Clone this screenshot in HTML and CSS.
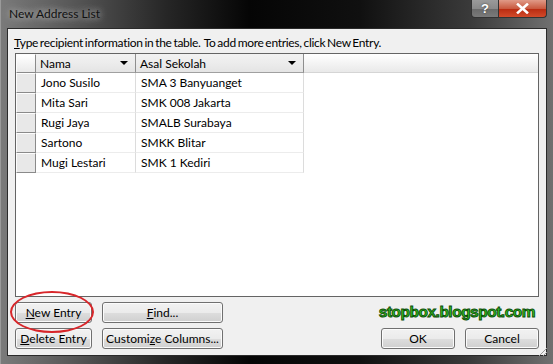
FILE: index.html
```html
<!DOCTYPE html>
<html lang="en">
<head>
    <meta charset="UTF-8">
    <meta name="viewport" content="width=device-width, initial-scale=1.0">
    <title>New Address List</title>
    <link rel="stylesheet" href="styles.css">
</head>
<body>
    <div class="window">
        <div class="titlebar">
            <span class="title">New Address List</span>
            <div class="caption-buttons">
                <span class="cap cap-help">?</span>
                <span class="cap cap-close">
                    <svg width="13" height="11" viewBox="0 0 13 11">
                        <path d="M2 1.5 L11 9.5 M11 1.5 L2 9.5" stroke="#fff" stroke-width="2.6" stroke-linecap="square"/>
                    </svg>
                </span>
            </div>
        </div>

        <div class="client">
            <p class="hint"><u>T</u>ype recipient information in the table.&nbsp; To add more entries, click New Entry.</p>

            <div class="grid">
                <div class="grid-rows">
                    <div class="head-cell sel"></div>
                    <div class="head-cell col">Nama<span class="arrow"></span></div>
                    <div class="head-cell col">Asal Sekolah<span class="arrow"></span></div>
                    <div class="head-cell filler"></div>

                    <div class="sel"></div><div class="cell">Jono Susilo</div><div class="cell">SMA 3 Banyuanget</div><div class="cell empty"></div>
                    <div class="sel"></div><div class="cell">Mita Sari</div><div class="cell">SMK 008 Jakarta</div><div class="cell empty"></div>
                    <div class="sel"></div><div class="cell">Rugi Jaya</div><div class="cell">SMALB Surabaya</div><div class="cell empty"></div>
                    <div class="sel"></div><div class="cell">Sartono</div><div class="cell">SMKK Blitar</div><div class="cell empty"></div>
                    <div class="sel"></div><div class="cell">Mugi Lestari</div><div class="cell">SMK 1 Kediri</div><div class="cell empty"></div>
                </div>
            </div>

            <div class="actions">
                <div class="action-row">
                    <button class="btn btn-small highlighted"><u>N</u>ew Entry</button>
                    <button class="btn btn-large"><u>F</u>ind...</button>
                    <span class="watermark">stopbox.blogspot.com</span>
                </div>
                <div class="action-row">
                    <button class="btn btn-small"><u>D</u>elete Entry</button>
                    <button class="btn btn-large">Customi<u>z</u>e Columns...</button>
                    <span class="spacer"></span>
                    <button class="btn btn-dialog">OK</button>
                    <button class="btn btn-dialog">Cancel</button>
                </div>
            </div>
            <span class="grip"></span>
        </div>
    </div>
</body>
</html>
```

FILE: styles.css
```css
html, body {
    margin: 0;
    padding: 0;
}
body {
    width: 553px;
    height: 364px;
    overflow: hidden;
    font-family: Lato, 'Noto Sans', sans-serif;
    font-size: 12px;
    color: #000;
    background-color: #000;
}
.window {
    width: 553px;
    height: 364px;
    box-sizing: border-box;
    display: flex;
    flex-direction: column;
    padding: 0 6px 8px 6px;
    background: linear-gradient(90deg, #7a7a7a 0%, #5a5a5a 12%, #262626 30%, #050505 45%, #101010 65%, #3a3a3a 85%, #707070 100%);
    border-left: 1px solid #9a9a9a;
}
.titlebar {
    height: 28px;
    display: flex;
    justify-content: space-between;
    align-items: flex-start;
    flex-shrink: 0;
}
.title {
    margin: 6px 0 0 2px;
    color: #111;
    text-shadow: 0 0 6px #bbb, 0 0 10px #aaa;
}
.caption-buttons {
    display: flex;
}
.cap {
    height: 18px;
    display: flex;
    align-items: center;
    justify-content: center;
    border: 1px solid #333;
    border-top: none;
    box-sizing: border-box;
}
.cap-help {
    width: 28px;
    border-radius: 0 0 0 4px;
    background: linear-gradient(#9a9a9a, #8a8a8a 50%, #6a6a6a 51%, #7a7a7a);
    color: #fff;
    font-family: 'Liberation Sans', sans-serif;
    font-weight: bold;
    font-size: 13px;
    text-shadow: 0 0 2px #333;
}
.cap-close {
    width: 48px;
    border-left: none;
    border-radius: 0 0 4px 0;
    background: linear-gradient(#e09a88, #c95a40 50%, #b82a10 51%, #d24a2a);
}
.client {
    flex: 1;
    position: relative;
    display: flex;
    flex-direction: column;
    background-color: #f0f0f0;
    border: 1px solid #2a2a2a;
    padding: 0 7px 7px 7px;
}
.hint {
    margin: 6px 0 2px -1px;
    line-height: 16px;
    white-space: nowrap;
    word-spacing: -1px;
    letter-spacing: -0.3px;
}
.grid {
    flex: 1;
    background-color: #fff;
    border: 1px solid #646464;
}
.grid-rows {
    display: grid;
    grid-template-columns: 20px 100px 168px 1fr;
    grid-template-rows: 19px;
    grid-auto-rows: 20px;
}
.head-cell {
    box-sizing: border-box;
    border-bottom: 1px solid #a0a0a0;
    background: linear-gradient(#ffffff, #f4f4f4 50%, #e9e9e9);
}
.head-cell.col {
    display: flex;
    align-items: center;
    justify-content: space-between;
    padding: 0 7px 0 4px;
    border-right: 1px solid #8e8e8e;
    background: linear-gradient(#f2f2f2, #ececec 50%, #e4e4e4);
}
.head-cell.filler {
    border-bottom-color: #d5d5d5;
}
.arrow {
    width: 0;
    height: 0;
    border-left: 4px solid transparent;
    border-right: 4px solid transparent;
    border-top: 4px solid #000;
}
.sel {
    box-sizing: border-box;
    background-color: #e8e8e8;
    border-top: 1px solid #fdfdfd;
    border-left: 1px solid #fdfdfd;
    border-right: 1px solid #8a8a8a;
    border-bottom: 1px solid #8a8a8a;
}
.head-cell.sel {
    background-color: #ececec;
}
.cell {
    box-sizing: border-box;
    padding-left: 5px;
    line-height: 19px;
    white-space: nowrap;
    border-right: 1px solid #dcdcdc;
    border-bottom: 1px solid #ececec;
}
.cell.empty {
    border: none;
}
.actions {
    display: flex;
    flex-direction: column;
    gap: 6px;
    margin-top: 5px;
}
.action-row {
    display: flex;
    align-items: center;
    gap: 10px;
    height: 20px;
}
.btn {
    height: 21px;
    box-sizing: border-box;
    padding: 0;
    white-space: nowrap;
    font-family: inherit;
    font-size: inherit;
    color: #000;
    border: 1px solid #707070;
    border-radius: 3px;
    background: linear-gradient(#f2f2f2, #ebebeb 50%, #dddddd 51%, #cfcfcf);
    box-shadow: inset 0 0 0 1px #fbfbfb;
}
.btn-small {
    width: 77px;
}
.btn-large {
    width: 121px;
}
.btn-dialog {
    width: 74px;
}
.highlighted {
    position: relative;
}
.highlighted::after {
    content: "";
    position: absolute;
    left: -6px;
    top: -12px;
    width: 80px;
    height: 38px;
    border: 2px solid #d8262a;
    border-radius: 50%;
}
.spacer {
    flex: 1;
}
.watermark {
    margin-left: auto;
    margin-right: 4px;
    font-family: 'Liberation Sans', sans-serif;
    font-weight: bold;
    font-size: 15.5px;
    letter-spacing: -0.5px;
    color: #2fbf1f;
    -webkit-text-stroke: 0.9px #0d4d08;
}
.grip {
    position: absolute;
    right: -1px;
    bottom: -1px;
    width: 8px;
    height: 8px;
    background: linear-gradient(135deg, transparent 45%, #9a9a9a 45%, #9a9a9a 55%, transparent 55%, transparent 70%, #9a9a9a 70%, #9a9a9a 80%, transparent 80%);
}
```
